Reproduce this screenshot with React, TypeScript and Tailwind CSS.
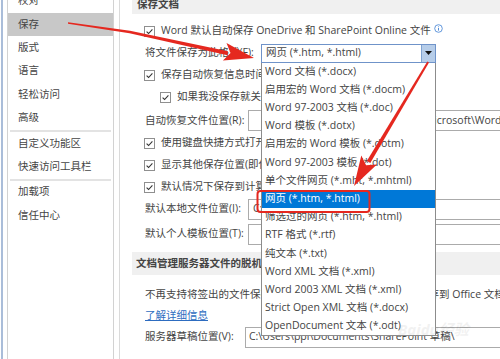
import React from 'react';

const formats = [
  'Word 文档 (*.docx)',
  '启用宏的 Word 文档 (*.docm)',
  'Word 97-2003 文档 (*.doc)',
  'Word 模板 (*.dotx)',
  '启用宏的 Word 模板 (*.dotm)',
  'Word 97-2003 模板 (*.dot)',
  '单个文件网页 (*.mht, *.mhtml)',
  '网页 (*.htm, *.html)',
  '筛选过的网页 (*.htm, *.html)',
  'RTF 格式 (*.rtf)',
  '纯文本 (*.txt)',
  'Word XML 文档 (*.xml)',
  'Word 2003 XML 文档 (*.xml)',
  'Strict Open XML 文档 (*.docx)',
  'OpenDocument 文本 (*.odt)',
];

function Check() {
  return (
    <span className="flex h-[11px] w-[11px] shrink-0 items-center justify-center border border-[#8f8f8f] bg-white">
      <svg width="9" height="9" viewBox="0 0 9 9">
        <path d="M1.6 4.6 L3.6 6.5 L7.4 2.4" fill="none" stroke="#333" strokeWidth="1.1" />
      </svg>
    </span>
  );
}

function SideItem({ label, active }: { label: string; active?: boolean }) {
  return (
    <div className={`flex h-[23.4px] items-center pl-[10px] ${active ? 'bg-[#c8c8c8]' : ''}`}>{label}</div>
  );
}

function CheckRow({ label, indent, clip = true }: { label: string; indent?: boolean; clip?: boolean }) {
  return (
    <div
      className={`flex h-[22px] items-center gap-[6px] whitespace-nowrap ${indent ? 'pl-[28px]' : 'pl-[12px]'} ${clip ? 'w-[304px] overflow-hidden' : ''}`}
    >
      <Check />
      <span>{label}</span>
    </div>
  );
}

export default function App() {
  return (
    <div className="relative flex h-[359px] w-[500px] overflow-hidden bg-white font-['Open_Sans','Noto_Sans_CJK_SC',sans-serif] text-[10.5px] text-[#444]">
      <div className="w-[1px] shrink-0" />
      <div className="w-[2px] shrink-0 bg-[#aabdd9]" />
      <div className="w-[4px] shrink-0" />
      {/* Sidebar */}
      <div className="flex w-[107px] shrink-0 flex-col border-l border-r border-[#d2d2d2]">
        <div className="-mt-[10.5px] flex flex-col">
          <SideItem label="校对" />
          <SideItem label="保存" active />
          <SideItem label="版式" />
          <SideItem label="语言" />
          <SideItem label="轻松访问" />
          <SideItem label="高级" />
          <div className="mx-[2px] h-[2px] bg-[#e3e3e3]" />
          <SideItem label="自定义功能区" />
          <SideItem label="快速访问工具栏" />
          <div className="mx-[2px] h-[2px] bg-[#e3e3e3]" />
          <SideItem label="加载项" />
          <SideItem label="信任中心" />
        </div>
      </div>
      <div className="w-[5px] shrink-0" />
      <div className="w-px shrink-0 bg-[#dadada]" />
      {/* Main */}
      <div className="flex min-w-0 flex-1 flex-col pl-[12px]">
        <div className="h-[14px] overflow-hidden bg-[#f0f0f0] px-[5px]">
          <div className="-mt-[4px] font-bold leading-[16px]">保存文档</div>
        </div>
        <div className="mt-[6px] flex h-[22px] items-center gap-[6px] whitespace-nowrap pl-[12px]">
          <Check />
          <span>Word 默认自动保存 OneDrive 和 SharePoint Online 文件</span>
          <svg width="9" height="9" viewBox="0 0 9 9" className="-ml-[3px] -mt-[6px]">
            <circle cx="4.5" cy="4.5" r="3.8" fill="none" stroke="#3d7fd3" strokeWidth="0.8" />
            <path d="M4.5 3.8 V6.6 M4.5 2.3 V2.9" stroke="#3d7fd3" strokeWidth="0.9" />
          </svg>
        </div>
        <div className="flex h-[22px] items-center pl-[13px]">
          <span className="w-[116px] shrink-0 whitespace-nowrap">将文件保存为此格式(F):</span>
          <div className="relative z-10 h-[19px] w-[175px] shrink-0">
            <div className="flex h-[19px] items-center border border-[#6f93c9] bg-white">
              <span className="flex-1 pl-[4px] whitespace-nowrap">网页 (*.htm, *.html)</span>
              <span className="flex h-full w-[14px] items-center justify-center border-l border-[#7fa3d2] bg-[#b6cde9]">
                <svg width="7" height="4" viewBox="0 0 7 4">
                  <path d="M0 0 H7 L3.5 4 Z" fill="#111" />
                </svg>
              </span>
            </div>
            <div className="absolute left-0 top-[19px] w-[175px] border border-t-0 border-[#8c8c8c] bg-white">
              {formats.map((f, i) => (
                <div
                  key={f}
                  className={`flex h-[18.2px] items-center whitespace-nowrap pl-[3px] ${i === 7 ? 'bg-[#0078d7] text-white' : ''}`}
                >
                  {f}
                </div>
              ))}
            </div>
          </div>
        </div>
        <CheckRow label="保存自动恢复信息时间间隔(A)" />
        <CheckRow label="如果我没保存就关闭，请保留上次自动保留的版本(U)" indent />
        <div className="mt-[1px] flex h-[23px] items-center pl-[13px]">
          <span className="w-[103px] shrink-0 whitespace-nowrap">自动恢复文件位置(R):</span>
          <div className="-mr-[4px] flex h-[21px] flex-1 items-center overflow-hidden whitespace-nowrap border border-[#ababab] pl-[18px]">
            C:\Users\ppl\AppData\Roaming\Microsoft\Word\
          </div>
        </div>
        <CheckRow label="使用键盘快捷方式打开或保存文件时不显示 Backstage(S)" />
        <CheckRow label="显示其他保存位置(即使可能需要登录)(S)" />
        <CheckRow label="默认情况下保存到计算机(C)" />
        <div className="flex h-[22px] items-center pl-[13px]">
          <span className="w-[103px] shrink-0 whitespace-nowrap">默认本地文件位置(I):</span>
          <div className="-mr-[4px] flex h-[21px] flex-1 items-center overflow-hidden whitespace-nowrap border border-[#ababab] pl-[4px]">
            C:\Users\ppl\Documents\
          </div>
        </div>
        <div className="mt-[2px] flex h-[24px] items-center pl-[13px]">
          <span className="w-[103px] shrink-0 whitespace-nowrap">默认个人模板位置(T):</span>
          <div className="-mr-[4px] h-[21px] flex-1 border border-[#ababab]" />
        </div>
        <div className="mt-[6px] flex h-[23px] items-center whitespace-nowrap bg-[#f0f0f0] px-[4px] font-bold">
          文档管理服务器文件的脱机编辑选项
        </div>
        <div className="mt-[9px] flex h-[22px] items-center whitespace-nowrap pl-[13px]">
          不再支持将签出的文件保存到服务器草稿。签出的文件现将保存到 Office 文档缓存。
        </div>
        <div className="flex h-[20px] items-center pl-[13px]">
          <span className="text-[#2d6cc0] underline decoration-[#2d6cc0]">了解详细信息</span>
        </div>
        <div className="flex h-[22px] items-center pl-[13px]">
          <span className="w-[100px] shrink-0 whitespace-nowrap">服务器草稿位置(V):</span>
          <div className="-mr-[4px] flex h-[21px] flex-1 items-center whitespace-nowrap border border-[#ababab] pl-[3px]">
            C:\Users\ppl\Documents\SharePoint 草稿\
          </div>
        </div>
      </div>

      {/* watermark */}
      <div className="pointer-events-none absolute left-[398px] top-[318px] z-30 text-[15px] font-bold italic text-[#000] opacity-[0.05]">
        Baidu经验
      </div>

      {/* annotations */}
      <svg className="pointer-events-none absolute left-0 top-0 z-20" width="500" height="359" viewBox="0 0 500 359">
        <rect x="257.5" y="191" width="112" height="21" rx="3" fill="none" stroke="#e5281f" strokeWidth="2" />
        <path d="M68 22.3 L130 30.7 L228 51.2 L227.5 55.2 L129.5 33.3 L68 23.7 Z" fill="#e5281f" />
        <path d="M226.5 43.1 L254 58 L222.9 60.6 L230.5 53.1 Z" fill="#e5281f" />
        <path d="M427.3 61.6 L429 62.4 L370.3 163 L366.8 161 Z" fill="#e5281f" />
        <path d="M376.9 164.6 L354 186 L361.3 155.6 L366.1 165.3 Z" fill="#e5281f" />
      </svg>
    </div>
  );
}
